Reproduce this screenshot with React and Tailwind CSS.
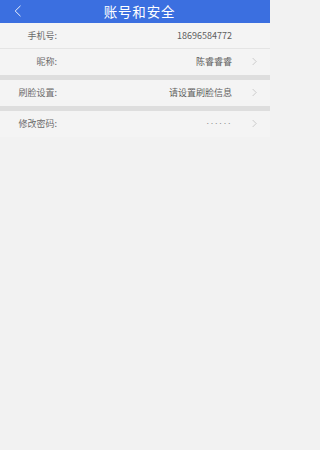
const rows = [
  [
    { label: '手机号:', value: '18696584772', arrow: false },
    { label: '昵称:', value: '陈睿睿睿', arrow: true },
  ],
  [{ label: '刷脸设置:', value: '请设置刷脸信息', arrow: true }],
  [{ label: '修改密码:', value: '······', arrow: true, dots: true }],
];

function Chevron({ className }) {
  return (
    <svg viewBox="0 0 6 10" className={className} fill="none">
      <path d="M0.8 0.8 L5 5 L0.8 9.2" stroke="currentColor" strokeWidth="0.8" />
    </svg>
  );
}

export default function App() {
  return (
    <div
      className="min-h-screen w-full bg-[#f2f2f2]"
      style={{ fontFamily: '"Noto Sans CJK SC", "Noto Sans", sans-serif' }}
    >
      <div className="w-[270px]">
        {/* Header */}
        <div className="relative flex h-[23px] items-center justify-center bg-[#3b6fe0]">
          <svg viewBox="0 0 8 12" className="absolute left-[14px] top-[5px] h-[12px] w-[8px]" fill="none">
            <path d="M6.5 0.8 L1.2 6 L6.5 11.2" stroke="white" strokeWidth="0.9" />
          </svg>
          <span className="pl-[9px] text-[13.5px] leading-none tracking-[0.8px] text-white">账号和安全</span>
        </div>

        {rows.map((group, gi) => (
          <div key={gi} className={gi > 0 ? 'border-t-[5px] border-[#dedede]' : ''}>
            {group.map((item, i) => (
              <div
                key={item.label}
                className={`relative flex h-[26px] items-center bg-[#f4f4f4] text-[9px] text-[#6b6b6b] ${
                  i < group.length - 1 ? 'border-b border-[#e4e4e4]' : ''
                }`}
              >
                <span className="w-[57px] text-right">{item.label}</span>
                {item.dots ? (
                  <span
                    className="flex-1 pr-[38px] text-right text-[9px] tracking-[1.3px] text-[#8a8a8a]"
                    style={{ fontFamily: '"Liberation Sans", sans-serif' }}
                  >
                    {item.value}
                  </span>
                ) : (
                  <span className="flex-1 pr-[38px] text-right text-[#5e5e5e]">{item.value}</span>
                )}
                {item.arrow && <Chevron className="absolute left-[252px] top-[8px] h-[9px] w-[5px] text-[#b8b8b8]" />}
              </div>
            ))}
          </div>
        ))}
      </div>
    </div>
  );
}
